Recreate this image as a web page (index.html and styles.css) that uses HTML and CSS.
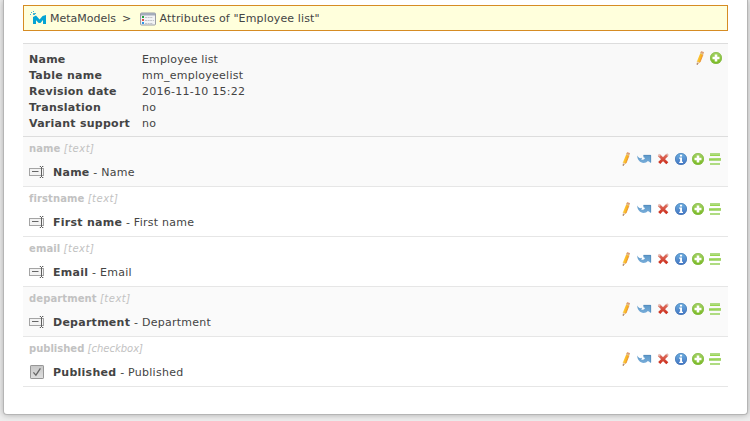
FILE: index.html
```html
<!DOCTYPE html>
<html lang="en">
<head>
<meta charset="utf-8">
<title>Attributes of "Employee list"</title>
<link rel="stylesheet" href="styles.css">
</head>
<body>
<svg class="sprite" aria-hidden="true">
  <defs>
    <linearGradient id="g-pencil" x1="0" x2="1" y1="0" y2=".4"><stop offset="0" stop-color="#ffdf45"/><stop offset="1" stop-color="#f59a12"/></linearGradient>
    <linearGradient id="g-arrow" x1="0" x2="0" y1="0" y2="1"><stop offset="0" stop-color="#5c98c9"/><stop offset="1" stop-color="#77acd8"/></linearGradient>
    <linearGradient id="g-cross" gradientUnits="userSpaceOnUse" x1="0" x2="0" y1="3" y2="13"><stop offset="0" stop-color="#df7768"/><stop offset="1" stop-color="#cb2a18"/></linearGradient>
    <linearGradient id="g-info" x1="0" x2="0" y1="0" y2="1"><stop offset="0" stop-color="#6fb3e0"/><stop offset="1" stop-color="#3f70c2"/></linearGradient>
    <linearGradient id="g-add" x1="0" x2="0" y1="0" y2="1"><stop offset="0" stop-color="#a5d268"/><stop offset="1" stop-color="#76b91b"/></linearGradient>
    <linearGradient id="g-box" x1="0" x2="0" y1="0" y2="1"><stop offset="0" stop-color="#c6c6c6"/><stop offset="1" stop-color="#e0e0e0"/></linearGradient>
  </defs>
  <symbol id="pencil" viewBox="0 0 16 16">
    <path d="M9 1.5 11.8 2.3 8 12.2 5 15 4.9 11.4Z" fill="url(#g-pencil)"/>
    <path d="M9.1 1.3 11.9 2.1 11.3 3.8 8.4 2.9Z" fill="#db9c7e"/>
    <path d="M8.4 2.9 11.3 3.8 11 4.7 8 3.8Z" fill="#d9ccb0"/>
    <path d="M4.9 11.4 7.8 12.2 5 14.9Z" fill="#e6cdbb"/>
    <path d="M4.8 13.3 6.3 13.8 4.8 15.1Z" fill="#765052"/>
    <path d="M11 4.7 8 12.2" stroke="#e5801c" stroke-width=".7"/>
  </symbol>
  <symbol id="arrow" viewBox="0 0 16 16">
    <path d="M1.2 4.6C1.2 9 4.1 12 7.6 12 9.4 12 10.8 11.2 11.9 10L15 12V4H7.4V6.2L9 6.9C8 8.8 6.4 9.1 5 8.7 6.2 8.3 6.1 6.6 5 6.7 4.8 8 2.7 7.4 1.2 4.6Z" fill="url(#g-arrow)"/>
    <path d="M7.6 4.3H14.7V11.4" fill="none" stroke="#4b83b4" stroke-width=".6"/>
  </symbol>
  <symbol id="cross" viewBox="0 0 16 16">
    <path d="M4 4.2 12.3 12.2M12.4 3.8 4.2 12" stroke="url(#g-cross)" stroke-width="2.9"/>
    <path d="M3.4 3.6 5 5.1M11.8 4.2 13 3.1" stroke="#e3b8ae" stroke-width="2"/>
  </symbol>
  <symbol id="info" viewBox="0 0 16 16">
    <circle cx="8" cy="8" r="6" fill="url(#g-info)"/>
    <circle cx="8" cy="8" r="5.6" fill="none" stroke="#4d7eb7" stroke-width=".7"/>
    <path d="M7 3.8H9.1V5.6H7ZM6.2 6.6H9V10.7H10V12H6.2V10.7H7.1V7.8H6.2Z" fill="#fff"/>
  </symbol>
  <symbol id="add" viewBox="0 0 16 16">
    <circle cx="8" cy="8" r="6" fill="url(#g-add)"/>
    <circle cx="8" cy="8" r="5.6" fill="none" stroke="#8abc50" stroke-width=".7"/>
    <path d="M6.7 4.5H9.3V6.7H11.5V9.3H9.3V11.5H6.7V9.3H4.5V6.7H6.7Z" fill="#fff"/>
  </symbol>
  <symbol id="drag" viewBox="0 0 16 16">
    <path d="M3 2H13V5H3ZM2 7H14V10H2ZM3 12H13V14H3Z" fill="#afdc82"/>
    <path d="M3 4.4H13M2 8.6 14 8" stroke="#96d34a" stroke-width="1"/>
  </symbol>
  <symbol id="textfield" viewBox="0 0 16 16">
    <rect x=".5" y="4.5" width="14" height="7" fill="#f3f3f3" stroke="#a4a4a4"/>
    <path d="M3 7.5H9.5" stroke="#666"/>
    <path d="M12.5 3V13M10.8 2.5H12M13 2.5H14.3M10.8 13.5H12M13 13.5H14.3" stroke="#606060"/>
  </symbol>
  <symbol id="checkbox" viewBox="0 0 16 16">
    <rect x="1.5" y="1.5" width="13" height="13" rx=".6" fill="url(#g-box)" stroke="#979797"/>
    <path d="M4.4 8.4 6.9 11.2 11.4 4.4" fill="none" stroke="#686868" stroke-width="1.3"/>
  </symbol>
</svg>

<main class="panel">
  <nav class="breadcrumb">
    <svg class="logo" viewBox="0 0 18 16"><path d="M3 14V7L6 5.6 9.6 9.6 12.6 6 16 5V14H13V10L10.5 13H8.7L6 10.3V14Z" fill="#05a4d3"/><path d="M1 2H2V3H1ZM3 1H4V2H3ZM3 3H5V5H3ZM5 3H6V4H5ZM0 4H1V5H0Z" fill="#42b5d4"/></svg>
    <span class="crumb root">MetaModels</span><span class="crumb sep">&gt;</span>
    <svg class="listicon" viewBox="0 0 16 14"><rect x=".5" y="1" width="15" height="12" rx="1" fill="#f2f3f5" stroke="#999ca4"/><path d="M1 1H15V3.5H1Z" fill="#a4acba"/><path d="M2 4H4V6H2Z" fill="#25a23d"/><path d="M2 7H4V9H2Z" fill="#dc5148"/><path d="M2 10H4V12H2Z" fill="#2b94e4"/><path d="M5 5.5H13M5 8.5H14M5 11.5H13" stroke="#c2c4c9" stroke-dasharray="2 .6"/></svg>
    <span class="crumb current">Attributes of "Employee list"</span>
  </nav>

  <section class="summary">
    <dl class="facts">
      <dt>Name</dt><dd class="near">Employee list</dd>
      <dt>Table name</dt><dd>mm_employeelist</dd>
      <dt>Revision date</dt><dd>2016-11-10 15:22</dd>
      <dt>Translation</dt><dd>no</dd>
      <dt>Variant support</dt><dd>no</dd>
    </dl>
    <div class="tools">
      <svg><use href="#pencil"/></svg><svg><use href="#add"/></svg>
    </div>
  </section>

  <ul class="list">
    <li class="row shaded">
      <div><p class="type"><b>name</b> <i>[text]</i></p><p class="label"><svg><use href="#textfield"/></svg><span><b>Name</b> - Name</span></p></div>
      <div class="ops"><svg><use href="#pencil"/></svg><svg><use href="#arrow"/></svg><svg><use href="#cross"/></svg><svg><use href="#info"/></svg><svg><use href="#add"/></svg><svg><use href="#drag"/></svg></div>
    </li>
    <li class="row">
      <div><p class="type"><b>firstname</b> <i>[text]</i></p><p class="label"><svg><use href="#textfield"/></svg><span><b>First name</b> - First name</span></p></div>
      <div class="ops"><svg><use href="#pencil"/></svg><svg><use href="#arrow"/></svg><svg><use href="#cross"/></svg><svg><use href="#info"/></svg><svg><use href="#add"/></svg><svg><use href="#drag"/></svg></div>
    </li>
    <li class="row">
      <div><p class="type"><b>email</b> <i>[text]</i></p><p class="label"><svg><use href="#textfield"/></svg><span><b>Email</b> - Email</span></p></div>
      <div class="ops"><svg><use href="#pencil"/></svg><svg><use href="#arrow"/></svg><svg><use href="#cross"/></svg><svg><use href="#info"/></svg><svg><use href="#add"/></svg><svg><use href="#drag"/></svg></div>
    </li>
    <li class="row shaded">
      <div><p class="type"><b>department</b> <i>[text]</i></p><p class="label"><svg><use href="#textfield"/></svg><span><b>Department</b> - Department</span></p></div>
      <div class="ops"><svg><use href="#pencil"/></svg><svg><use href="#arrow"/></svg><svg><use href="#cross"/></svg><svg><use href="#info"/></svg><svg><use href="#add"/></svg><svg><use href="#drag"/></svg></div>
    </li>
    <li class="row">
      <div><p class="type tight"><b>published</b> <i>[checkbox]</i></p><p class="label"><svg><use href="#checkbox"/></svg><span><b>Published</b> - Published</span></p></div>
      <div class="ops"><svg><use href="#pencil"/></svg><svg><use href="#arrow"/></svg><svg><use href="#cross"/></svg><svg><use href="#info"/></svg><svg><use href="#add"/></svg><svg><use href="#drag"/></svg></div>
    </li>
  </ul>
</main>
</body>
</html>
```
FILE: styles.css
```css
* { box-sizing: border-box; }
html { height: 100%; overflow: hidden; background: #ededed; }
body {
  margin: 0;
  height: 421px;
  overflow: hidden;
  font: 11px/16px Verdana, "DejaVu Sans", sans-serif;
  letter-spacing: .26px;
  color: #444;
}
p, dl, dd, ul { margin: 0; padding: 0; }
svg { flex: none; display: block; }
.sprite { position: absolute; width: 0; height: 0; }

.panel {
  width: 745px;
  height: 415px;
  margin-left: 3px;
  padding: 5px 19px 0;
  background: #fff;
  border: 1px solid #b5b5b5;
  border-top: 0;
  border-radius: 0 0 4px 4px;
  box-shadow: 0 0 6px rgba(0, 0, 0, .28);
}

.breadcrumb {
  display: flex;
  align-items: center;
  height: 26px;
  padding-left: 6px;
  background: #ffffdc;
  border: 1px solid #d68c23;
}
.crumb { padding-top: 1px; }
.root { letter-spacing: 0; }
.current { letter-spacing: .14px; }
.logo { width: 18px; height: 16px; margin-right: 2px; }
.sep { margin: 0 8px 0 6px; }
.listicon { width: 16px; height: 14px; margin: 1px 4px 0 0; }

.summary {
  display: flex;
  justify-content: space-between;
  height: 94px;
  margin-top: 12px;
  padding: 7px 4px 0 6px;
  background: #f9f9f9;
  border-top: 1px solid #ddd;
  border-bottom: 1px solid #ddd;
}
.facts {
  display: grid;
  grid-template-columns: 113px 160px;
  grid-auto-rows: 16px;
  padding-top: 1px;
}
dt { font-weight: bold; white-space: nowrap; }
.near { letter-spacing: .15px; }
.tools { display: flex; margin-top: -1px; }
.tools svg { width: 16px; height: 16px; }

.list { list-style: none; }
.row {
  display: flex;
  justify-content: space-between;
  height: 50px;
  padding: 4px 5px 0 6px;
  border-bottom: 1px solid #e6e6e6;
}
.shaded { background: #fafafa; }
.type { font-size: 10px; letter-spacing: .1px; color: #c2c2c2; }
.type i { letter-spacing: .5px; }
.tight, .tight i { letter-spacing: 0; }
.label { display: flex; align-items: flex-start; gap: 8px; height: 17px; margin-top: 7px; }
.label span { padding-top: 1px; }
.label svg { width: 16px; height: 16px; }
.ops {
  display: grid;
  grid-template-columns: 18px 19px 18px 17px 17px 16px;
  padding-top: 10px;
}
.ops svg { width: 16px; height: 16px; }
```
